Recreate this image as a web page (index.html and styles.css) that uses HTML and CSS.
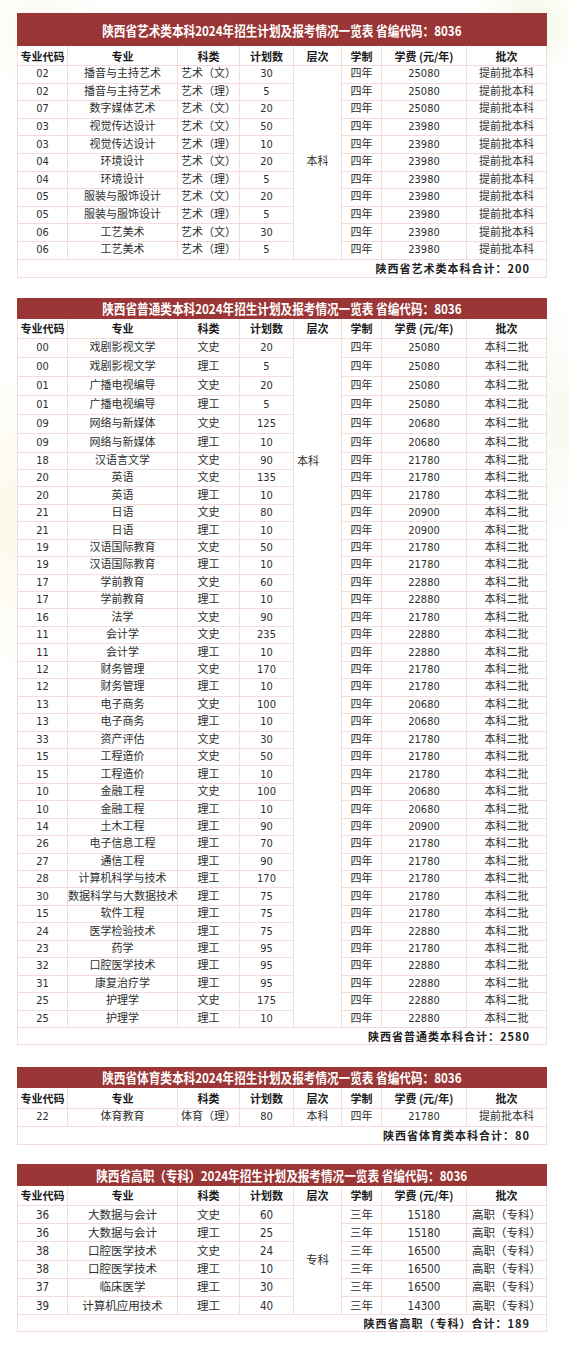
FILE: index.html
```html
<!DOCTYPE html>
<html lang="zh-CN">
<head>
<meta charset="utf-8">
<title>招生计划一览表</title>
<link rel="stylesheet" href="styles.css">
</head>
<body>
<main class="page">

<table class="plan plan-art">
  <colgroup><col class="c1"><col class="c2"><col class="c3"><col class="c4"><col class="c5"><col class="c6"><col class="c7"><col class="c8"></colgroup>
  <tr class="title"><td colspan="8"><span>陕西省艺术类本科2024年招生计划及报考情况一览表 省编代码：8036</span></td></tr>
  <tr class="head"><th>专业代码</th><th>专业</th><th>科类</th><th>计划数</th><th>层次</th><th>学制</th><th>学费 (元/年)</th><th>批次</th></tr>
  <tr><td>02</td><td>播音与主持艺术</td><td>艺术（文）</td><td>30</td><td rowspan="11" class="lvl">本科</td><td>四年</td><td>25080</td><td>提前批本科</td></tr>
  <tr><td>02</td><td>播音与主持艺术</td><td>艺术（理）</td><td>5</td><td>四年</td><td>25080</td><td>提前批本科</td></tr>
  <tr><td>07</td><td>数字媒体艺术</td><td>艺术（文）</td><td>20</td><td>四年</td><td>25080</td><td>提前批本科</td></tr>
  <tr><td>03</td><td>视觉传达设计</td><td>艺术（文）</td><td>50</td><td>四年</td><td>23980</td><td>提前批本科</td></tr>
  <tr><td>03</td><td>视觉传达设计</td><td>艺术（理）</td><td>10</td><td>四年</td><td>23980</td><td>提前批本科</td></tr>
  <tr><td>04</td><td>环境设计</td><td>艺术（文）</td><td>20</td><td>四年</td><td>23980</td><td>提前批本科</td></tr>
  <tr><td>04</td><td>环境设计</td><td>艺术（理）</td><td>5</td><td>四年</td><td>23980</td><td>提前批本科</td></tr>
  <tr><td>05</td><td>服装与服饰设计</td><td>艺术（文）</td><td>20</td><td>四年</td><td>23980</td><td>提前批本科</td></tr>
  <tr><td>05</td><td>服装与服饰设计</td><td>艺术（理）</td><td>5</td><td>四年</td><td>23980</td><td>提前批本科</td></tr>
  <tr><td>06</td><td>工艺美术</td><td>艺术（文）</td><td>30</td><td>四年</td><td>23980</td><td>提前批本科</td></tr>
  <tr><td>06</td><td>工艺美术</td><td>艺术（理）</td><td>5</td><td>四年</td><td>23980</td><td>提前批本科</td></tr>
  <tr class="total"><td colspan="8">陕西省艺术类本科合计：200</td></tr>
</table>

<table class="plan plan-gen">
  <colgroup><col class="c1"><col class="c2"><col class="c3"><col class="c4"><col class="c5"><col class="c6"><col class="c7"><col class="c8"></colgroup>
  <tr class="title"><td colspan="8"><span>陕西省普通类本科2024年招生计划及报考情况一览表 省编代码：8036</span></td></tr>
  <tr class="head"><th>专业代码</th><th>专业</th><th>科类</th><th>计划数</th><th>层次</th><th>学制</th><th>学费 (元/年)</th><th>批次</th></tr>
  <tr class="tall"><td>00</td><td>戏剧影视文学</td><td>文史</td><td>20</td><td rowspan="39" class="lvl lvl-top">本科</td><td>四年</td><td>25080</td><td>本科二批</td></tr>
  <tr class="tall"><td>00</td><td>戏剧影视文学</td><td>理工</td><td>5</td><td>四年</td><td>25080</td><td>本科二批</td></tr>
  <tr class="tall"><td>01</td><td>广播电视编导</td><td>文史</td><td>20</td><td>四年</td><td>25080</td><td>本科二批</td></tr>
  <tr class="tall"><td>01</td><td>广播电视编导</td><td>理工</td><td>5</td><td>四年</td><td>25080</td><td>本科二批</td></tr>
  <tr class="tall"><td>09</td><td>网络与新媒体</td><td>文史</td><td>125</td><td>四年</td><td>20680</td><td>本科二批</td></tr>
  <tr class="tall"><td>09</td><td>网络与新媒体</td><td>理工</td><td>10</td><td>四年</td><td>20680</td><td>本科二批</td></tr>
  <tr><td>18</td><td>汉语言文学</td><td>文史</td><td>90</td><td>四年</td><td>21780</td><td>本科二批</td></tr>
  <tr><td>20</td><td>英语</td><td>文史</td><td>135</td><td>四年</td><td>21780</td><td>本科二批</td></tr>
  <tr><td>20</td><td>英语</td><td>理工</td><td>10</td><td>四年</td><td>21780</td><td>本科二批</td></tr>
  <tr><td>21</td><td>日语</td><td>文史</td><td>80</td><td>四年</td><td>20900</td><td>本科二批</td></tr>
  <tr><td>21</td><td>日语</td><td>理工</td><td>10</td><td>四年</td><td>20900</td><td>本科二批</td></tr>
  <tr><td>19</td><td>汉语国际教育</td><td>文史</td><td>50</td><td>四年</td><td>21780</td><td>本科二批</td></tr>
  <tr><td>19</td><td>汉语国际教育</td><td>理工</td><td>10</td><td>四年</td><td>21780</td><td>本科二批</td></tr>
  <tr><td>17</td><td>学前教育</td><td>文史</td><td>60</td><td>四年</td><td>22880</td><td>本科二批</td></tr>
  <tr><td>17</td><td>学前教育</td><td>理工</td><td>10</td><td>四年</td><td>22880</td><td>本科二批</td></tr>
  <tr><td>16</td><td>法学</td><td>文史</td><td>90</td><td>四年</td><td>21780</td><td>本科二批</td></tr>
  <tr><td>11</td><td>会计学</td><td>文史</td><td>235</td><td>四年</td><td>22880</td><td>本科二批</td></tr>
  <tr><td>11</td><td>会计学</td><td>理工</td><td>10</td><td>四年</td><td>22880</td><td>本科二批</td></tr>
  <tr><td>12</td><td>财务管理</td><td>文史</td><td>170</td><td>四年</td><td>21780</td><td>本科二批</td></tr>
  <tr><td>12</td><td>财务管理</td><td>理工</td><td>10</td><td>四年</td><td>21780</td><td>本科二批</td></tr>
  <tr><td>13</td><td>电子商务</td><td>文史</td><td>100</td><td>四年</td><td>20680</td><td>本科二批</td></tr>
  <tr><td>13</td><td>电子商务</td><td>理工</td><td>10</td><td>四年</td><td>20680</td><td>本科二批</td></tr>
  <tr><td>33</td><td>资产评估</td><td>文史</td><td>30</td><td>四年</td><td>21780</td><td>本科二批</td></tr>
  <tr><td>15</td><td>工程造价</td><td>文史</td><td>50</td><td>四年</td><td>21780</td><td>本科二批</td></tr>
  <tr><td>15</td><td>工程造价</td><td>理工</td><td>10</td><td>四年</td><td>21780</td><td>本科二批</td></tr>
  <tr><td>10</td><td>金融工程</td><td>文史</td><td>100</td><td>四年</td><td>20680</td><td>本科二批</td></tr>
  <tr><td>10</td><td>金融工程</td><td>理工</td><td>10</td><td>四年</td><td>20680</td><td>本科二批</td></tr>
  <tr><td>14</td><td>土木工程</td><td>理工</td><td>90</td><td>四年</td><td>20900</td><td>本科二批</td></tr>
  <tr><td>26</td><td>电子信息工程</td><td>理工</td><td>70</td><td>四年</td><td>21780</td><td>本科二批</td></tr>
  <tr><td>27</td><td>通信工程</td><td>理工</td><td>90</td><td>四年</td><td>21780</td><td>本科二批</td></tr>
  <tr><td>28</td><td>计算机科学与技术</td><td>理工</td><td>170</td><td>四年</td><td>21780</td><td>本科二批</td></tr>
  <tr><td>30</td><td>数据科学与大数据技术</td><td>理工</td><td>75</td><td>四年</td><td>21780</td><td>本科二批</td></tr>
  <tr><td>15</td><td>软件工程</td><td>理工</td><td>75</td><td>四年</td><td>21780</td><td>本科二批</td></tr>
  <tr><td>24</td><td>医学检验技术</td><td>理工</td><td>75</td><td>四年</td><td>22880</td><td>本科二批</td></tr>
  <tr><td>23</td><td>药学</td><td>理工</td><td>95</td><td>四年</td><td>21780</td><td>本科二批</td></tr>
  <tr><td>32</td><td>口腔医学技术</td><td>理工</td><td>95</td><td>四年</td><td>22880</td><td>本科二批</td></tr>
  <tr><td>31</td><td>康复治疗学</td><td>理工</td><td>95</td><td>四年</td><td>22880</td><td>本科二批</td></tr>
  <tr><td>25</td><td>护理学</td><td>文史</td><td>175</td><td>四年</td><td>22880</td><td>本科二批</td></tr>
  <tr><td>25</td><td>护理学</td><td>理工</td><td>10</td><td>四年</td><td>22880</td><td>本科二批</td></tr>
  <tr class="total"><td colspan="8">陕西省普通类本科合计：2580</td></tr>
</table>

<table class="plan plan-pe">
  <colgroup><col class="c1"><col class="c2"><col class="c3"><col class="c4"><col class="c5"><col class="c6"><col class="c7"><col class="c8"></colgroup>
  <tr class="title"><td colspan="8"><span>陕西省体育类本科2024年招生计划及报考情况一览表 省编代码：8036</span></td></tr>
  <tr class="head"><th>专业代码</th><th>专业</th><th>科类</th><th>计划数</th><th>层次</th><th>学制</th><th>学费 (元/年)</th><th>批次</th></tr>
  <tr><td>22</td><td>体育教育</td><td>体育（理）</td><td>80</td><td class="lvl">本科</td><td>四年</td><td>21780</td><td>提前批本科</td></tr>
  <tr class="total"><td colspan="8">陕西省体育类本科合计：80</td></tr>
</table>

<table class="plan plan-voc">
  <colgroup><col class="c1"><col class="c2"><col class="c3"><col class="c4"><col class="c5"><col class="c6"><col class="c7"><col class="c8"></colgroup>
  <tr class="title"><td colspan="8"><span>陕西省高职（专科）2024年招生计划及报考情况一览表 省编代码：8036</span></td></tr>
  <tr class="head"><th>专业代码</th><th>专业</th><th>科类</th><th>计划数</th><th>层次</th><th>学制</th><th>学费 (元/年)</th><th>批次</th></tr>
  <tr><td>36</td><td>大数据与会计</td><td>文史</td><td>60</td><td rowspan="6" class="lvl">专科</td><td>三年</td><td>15180</td><td>高职（专科）</td></tr>
  <tr><td>36</td><td>大数据与会计</td><td>理工</td><td>25</td><td>三年</td><td>15180</td><td>高职（专科）</td></tr>
  <tr><td>38</td><td>口腔医学技术</td><td>文史</td><td>24</td><td>三年</td><td>16500</td><td>高职（专科）</td></tr>
  <tr><td>38</td><td>口腔医学技术</td><td>理工</td><td>10</td><td>三年</td><td>16500</td><td>高职（专科）</td></tr>
  <tr><td>37</td><td>临床医学</td><td>理工</td><td>30</td><td>三年</td><td>16500</td><td>高职（专科）</td></tr>
  <tr><td>39</td><td>计算机应用技术</td><td>理工</td><td>40</td><td>三年</td><td>14300</td><td>高职（专科）</td></tr>
  <tr class="total"><td colspan="8">陕西省高职（专科）合计：189</td></tr>
</table>

</main>
</body>
</html>
```

FILE: styles.css
```css
html, body {
  margin: 0;
  padding: 0;
}

body {
  width: 569px;
  min-height: 1362px;
  background:
    radial-gradient(ellipse 60px 50px at 530px 25px, rgba(236, 244, 214, 0.7), rgba(255, 255, 255, 0) 100%),
    radial-gradient(ellipse 80px 160px at 20px 520px, rgba(250, 246, 226, 0.8), rgba(255, 255, 255, 0) 100%),
    radial-gradient(ellipse 70px 60px at 40px 30px, rgba(250, 246, 230, 0.7), rgba(255, 255, 255, 0) 100%),
    radial-gradient(ellipse 50px 120px at 560px 420px, rgba(240, 246, 228, 0.6), rgba(255, 255, 255, 0) 100%),
    #ffffff;
  font-family: "Liberation Sans Narrow", "DejaVu Sans Condensed", "Noto Sans CJK SC", sans-serif;
  color: #2b2b2b;
}

.page {
  display: flex;
  flex-direction: column;
  align-items: flex-start;
  padding: 13px 0 0 17px;
}

.plan {
  width: 529px;
  table-layout: fixed;
  border-collapse: collapse;
  background: #ffffff;
}

.plan-gen { margin-top: 20px; }
.plan-pe { margin-top: 22px; }
.plan-voc { margin-top: 19px; }

.c1 { width: 50px; }
.c2 { width: 110px; }
.c3 { width: 62px; }
.c4 { width: 54px; }
.c5 { width: 48px; }
.c6 { width: 40px; }
.c7 { width: 85px; }
.c8 { width: 80px; }

.plan td,
.plan th {
  padding: 0;
  border: 1px solid #f3dcdc;
  text-align: center;
  vertical-align: middle;
  font-size: 11px;
  line-height: 12px;
  white-space: nowrap;
  overflow: hidden;
}

.plan td {
  font-weight: 400;
  color: #2e2e2e;
}

.plan tr {
  height: 17.6px;
}

.plan .title td {
  background: #9b3636;
  border-color: #9b3636;
  color: #ffffff;
  font-family: "Noto Sans CJK SC", sans-serif;
  font-weight: 700;
  font-size: 13.5px;
  line-height: 14px;
}

.plan .title td span {
  display: inline-block;
  transform: scaleX(0.86);
  transform-origin: center;
}

.plan-art .title { height: 32px; }
.plan-gen .title,
.plan-pe .title { height: 20px; }
.plan-voc .title { height: 21px; }

.plan .head {
  height: 20px;
}

.plan .head th {
  font-family: "Noto Sans CJK SC", sans-serif;
  font-weight: 700;
  font-size: 11px;
  color: #1a1a1a;
}

.plan-gen tr.tall { height: 19px; }
.plan-gen tr { height: 17.45px; }
.plan-pe tr { height: 18px; }
.plan-pe .head { height: 21px; }
.plan-voc tr { height: 18.2px; }
.plan-voc td { font-size: 11.5px; }

.plan .lvl {
  text-align: center;
}

.plan .lvl-top {
  vertical-align: top;
  text-align: left;
  padding: 117px 0 0 3px;
}

.plan .total td {
  text-align: right;
  padding-right: 16px;
  font-family: "Noto Sans CJK SC", sans-serif;
  font-weight: 700;
  font-size: 11px;
  letter-spacing: 1px;
  color: #222222;
}

.plan .total { height: 18px; }
.plan-gen .total,
.plan-voc .total { height: 17px; }
```
